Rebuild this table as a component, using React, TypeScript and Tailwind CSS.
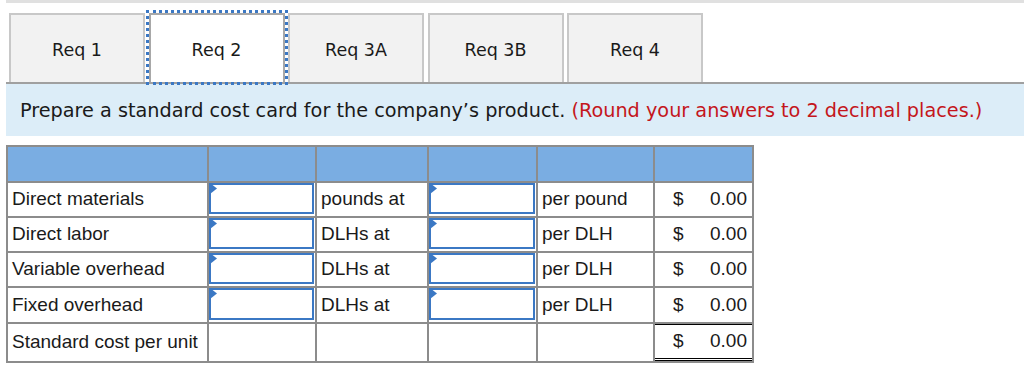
import React from 'react';

const tabs = ['Req 1', 'Req 2', 'Req 3A', 'Req 3B', 'Req 4'];

type Line = { label: string; unit: string; rate: string };

const lines: Line[] = [
    { label: 'Direct materials', unit: 'pounds at', rate: 'per pound' },
    { label: 'Direct labor', unit: 'DLHs at', rate: 'per DLH' },
    { label: 'Variable overhead', unit: 'DLHs at', rate: 'per DLH' },
    { label: 'Fixed overhead', unit: 'DLHs at', rate: 'per DLH' },
];

function AnswerBox() {
    return (
        <div className="relative h-full bg-white">
            <div className="absolute left-0 top-0 right-[1px] bottom-[2px] border-2 border-[#3b78c4] bg-white" />
            <svg className="absolute left-[1px] top-0" width="7" height="11" viewBox="0 0 7 11">
                <polygon points="0,0 7,5.5 0,11" fill="#3b78c4" />
            </svg>
        </div>
    );
}

function Amount({ total = false }: { total?: boolean }) {
    return (
        <div
            className={`flex h-full items-center justify-between bg-white pl-[18px] pr-[5px] ${
                total ? 'border-t border-b-[3px] border-t-black border-b-black border-double' : ''
            }`}
        >
            <span>$</span>
            <span>0.00</span>
        </div>
    );
}

export default function App() {
    return (
        <div className="w-[1024px] h-[370px] overflow-hidden bg-white">
            {/* thin strip above the tabs */}
            <div className="ml-[6px] h-[3px] bg-[#e0e0e0]" />

            {/* requirement tabs */}
            <div className="ml-[6px] mt-[10px] flex h-[71px] gap-[3.5px] border-b-2 border-[#a0a0a0] pl-[3px] font-['DejaVu_Sans',sans-serif] text-[17.5px] text-[#1a1a1a]">
                {tabs.map((tab, i) => (
                    <div
                        key={tab}
                        className={`relative z-10 flex h-[69px] w-[136px] items-center justify-center border-2 border-b-0 pt-[3px] ${
                            i === 1
                                ? 'bg-white border-[#a8a8a8] outline-[3px] outline-dotted outline-[#3b78c4]'
                                : 'bg-[#f2f2f2] border-[#c8c8c8]'
                        }`}
                    >
                        {tab}
                    </div>
                ))}
            </div>

            {/* instructions */}
            <div className="ml-[6px] flex h-[52px] items-center bg-[#dcedf8] pl-[14px] pt-[2px] font-['DejaVu_Sans',sans-serif] text-[19.25px] text-[#1a1a1a]">
                <p>
                    Prepare a standard cost card for the company’s product.{' '}
                    <span className="text-[#c4161c]">(Round your answers to 2 decimal places.)</span>
                </p>
            </div>

            {/* standard cost card */}
            <div className="ml-[6px] mt-[9px] inline-grid grid-cols-[199px_106px_110px_107px_115px_97px] grid-rows-[34px_33px_33px_33px_34px_37px] gap-[2px] bg-[#8c8c8c] p-[2px] font-['Liberation_Sans',Arial,sans-serif] text-[19px] text-[#1a1a1a]">
                {Array.from({ length: 6 }).map((_, i) => (
                    <div key={i} className="bg-[#7aade2]" />
                ))}

                {lines.map((line) => (
                    <React.Fragment key={line.label}>
                        <div className="flex items-center bg-white px-1">{line.label}</div>
                        <AnswerBox />
                        <div className="flex items-center bg-white px-1">{line.unit}</div>
                        <AnswerBox />
                        <div className="flex items-center bg-white px-1">{line.rate}</div>
                        <Amount />
                    </React.Fragment>
                ))}

                <div className="flex items-center bg-white px-1">Standard cost per unit</div>
                <div className="bg-white" />
                <div className="bg-white" />
                <div className="bg-white" />
                <div className="bg-white" />
                <Amount total />
            </div>
        </div>
    );
}
